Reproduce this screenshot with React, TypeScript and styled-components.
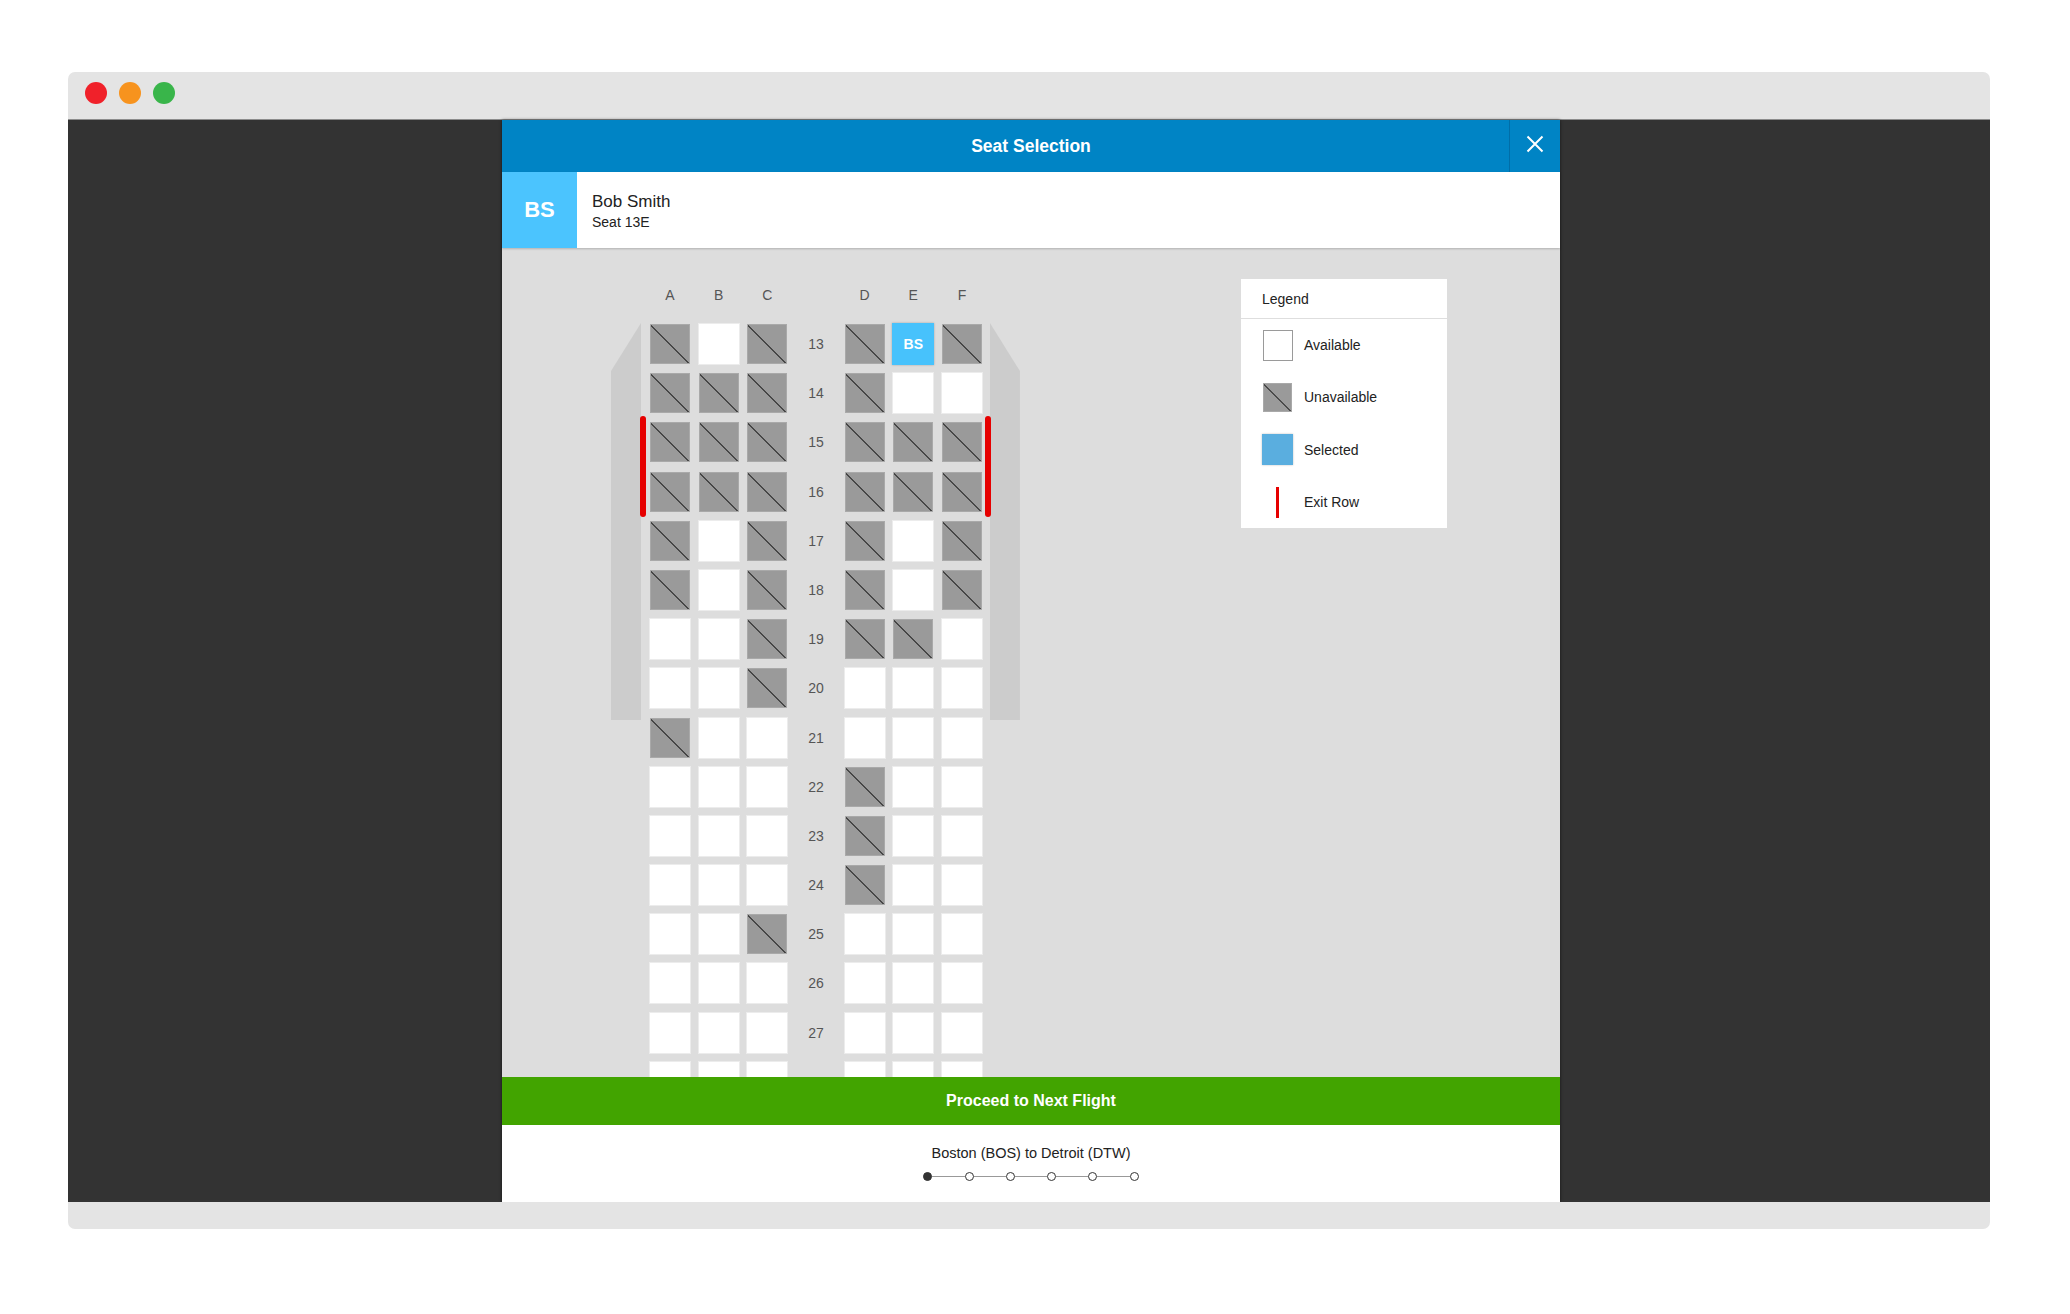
import React from 'react';
import styled, { createGlobalStyle } from 'styled-components';

const GlobalStyle = createGlobalStyle`
  html, body { margin: 0; padding: 0; background: #ffffff; }
  body { font-family: "Liberation Sans", Arial, Helvetica, sans-serif; color: #222; }
  * { box-sizing: border-box; }
`;

const Page = styled.div`
  width: 2070px;
  height: 1314px;
  padding: 72px 80px 0 68px;
`;

const Window = styled.div`
  width: 1922px;
  display: flex;
  flex-direction: column;
`;

const TitleBar = styled.div`
  height: 48px;
  background: #e4e4e4;
  border-radius: 7px 7px 0 0;
  border-bottom: 1px solid #8c8c8c;
  display: flex;
  align-items: flex-start;
  gap: 12px;
  padding: 10px 0 0 17px;
`;

const Light = styled.span<{ $color: string }>`
  width: 22px;
  height: 22px;
  border-radius: 50%;
  background: ${(p) => p.$color};
`;

const Content = styled.div`
  height: 1082px;
  background: #333333;
  display: flex;
  padding-left: 434px;
`;

const BottomBar = styled.div`
  height: 27px;
  background: #e4e4e4;
  border-radius: 0 0 7px 7px;
`;

const Modal = styled.div`
  width: 1058px;
  height: 100%;
  display: flex;
  flex-direction: column;
  box-shadow: 0 0 3px rgba(0, 0, 0, 0.6);
`;

const Header = styled.div`
  height: 52px;
  background: #0084c5;
  display: grid;
  grid-template-columns: 51px 1fr 51px;
  color: #fff;
`;

const Title = styled.div`
  grid-column: 2;
  display: flex;
  align-items: center;
  justify-content: center;
  font-size: 17.5px;
  font-weight: 700;
`;

const CloseButton = styled.div`
  border-left: 1px solid #006ea8;
  display: flex;
  align-items: center;
  justify-content: center;
  padding-bottom: 4px;
`;

const Passenger = styled.div`
  height: 76px;
  background: #fff;
  display: flex;
  position: relative;
  z-index: 1;
  box-shadow: 0 1px 2px rgba(0, 0, 0, 0.2);
`;

const Avatar = styled.div`
  width: 75px;
  background: #4bc4fe;
  color: #fff;
  font-size: 22px;
  font-weight: 700;
  display: flex;
  align-items: center;
  justify-content: center;
`;

const PassengerInfo = styled.div`
  display: flex;
  flex-direction: column;
  justify-content: center;
  padding: 2px 0 0 15px;
`;

const Name = styled.div`
  font-size: 17px;
  line-height: 20px;
  color: #222;
`;

const SeatLabel = styled.div`
  font-size: 14px;
  line-height: 17px;
  margin-top: 2px;
  color: #222;
`;

const Body = styled.div`
  flex: 1;
  min-height: 0;
  background: #dddddd;
  display: flex;
  overflow: hidden;
`;

const SeatMap = styled.div`
  margin-left: 109px;
  padding-top: 38.5px;
  display: flex;
  flex-direction: column;
`;

const ColumnHeader = styled.div`
  display: grid;
  grid-template-columns: repeat(7, 42px);
  column-gap: 6.67px;
  margin-left: 38px;
  height: 20px;
  align-items: center;
  text-align: center;
  font-size: 14px;
  color: #555;
`;

const Cabin = styled.div`
  position: relative;
  display: flex;
  margin-top: 20.5px;
`;

const Wall = styled.div<{ $side: 'left' | 'right' }>`
  width: 30px;
  height: 397px;
  margin-top: 0px;
  flex-shrink: 0;
  background: #cccccc;
  clip-path: ${(p) =>
    p.$side === 'left'
      ? 'polygon(0 48px, 100% 0, 100% 100%, 0 100%)'
      : 'polygon(0 0, 100% 48px, 100% 100%, 0 100%)'};
`;

const SeatGrid = styled.div`
  display: grid;
  grid-template-columns: repeat(7, 42px);
  grid-auto-rows: 42px;
  column-gap: 6.67px;
  row-gap: 7.2px;
  margin: 0 7px 0 8px;
`;

type Status = 'x' | 'o' | 's';

const Seat = styled.div<{ $status: Status }>`
  display: flex;
  align-items: center;
  justify-content: center;
  color: #fff;
  font-size: 14px;
  font-weight: 700;
  ${(p) =>
    p.$status === 'x'
      ? `
    margin: 1px;
    background-color: #9a9a9a;
    border: 1px solid #a9a9a9;
    background-image: linear-gradient(to top right, transparent calc(50% - 1px), #474747 calc(50% - 1px), #474747 calc(50% + 0.6px), transparent calc(50% + 0.6px));
  `
      : p.$status === 's'
      ? `
    background: #47c2fc;
    box-shadow: 0 0 2px rgba(0, 0, 0, 0.25);
  `
      : `
    background: #ffffff;
    border: 1px solid #ececec;
  `}
`;

const RowNumber = styled.div`
  display: flex;
  align-items: center;
  justify-content: center;
  font-size: 14px;
  color: #555;
`;

const ExitBar = styled.div<{ $side: 'left' | 'right' }>`
  position: absolute;
  top: 93px;
  ${(p) => (p.$side === 'left' ? 'left: 29px;' : 'right: 29px;')}
  width: 5.5px;
  height: 101px;
  border-radius: 3px;
  background: #e60000;
`;

const Legend = styled.div`
  margin: 31px 113px 0 auto;
  width: 206px;
  align-self: flex-start;
  background: #fff;
`;

const LegendHeader = styled.div`
  height: 40px;
  padding-left: 21px;
  border-bottom: 1px solid #dedede;
  display: flex;
  align-items: center;
  font-size: 14px;
  color: #222;
`;

const LegendItem = styled.div`
  height: 52.3px;
  display: flex;
  align-items: center;
  padding-left: 21px;
  gap: 11px;
  font-size: 14px;
  color: #222;
`;

const SwatchSlot = styled.div`
  width: 31px;
  height: 31px;
  display: flex;
  align-items: center;
  justify-content: center;
`;

const Swatch = styled.div<{ $kind: 'available' | 'unavailable' | 'selected' | 'exit' }>`
  ${(p) =>
    p.$kind === 'available'
      ? 'width: 30px; height: 31px; background: #fff; border: 1px solid #9a9a9a;'
      : p.$kind === 'unavailable'
      ? 'width: 29px; height: 29px; background-color: #9a9a9a; border: 1px solid #a9a9a9; background-image: linear-gradient(to top right, transparent calc(50% - 0.8px), #4a4a4a calc(50% - 0.8px), #4a4a4a calc(50% + 0.5px), transparent calc(50% + 0.5px));'
      : p.$kind === 'selected'
      ? 'width: 31px; height: 31px; background: #5aaedf; box-shadow: 0 0 2px rgba(0,0,0,0.25);'
      : 'width: 3px; height: 31px; background: #e60000;'}
`;

const ProceedButton = styled.div`
  height: 48px;
  background: #42a400;
  color: #fff;
  font-size: 16px;
  font-weight: 700;
  display: flex;
  align-items: center;
  justify-content: center;
`;

const Footer = styled.div`
  height: 77px;
  background: #fff;
  display: flex;
  flex-direction: column;
  align-items: center;
  padding-top: 20px;
`;

const Route = styled.div`
  font-size: 14.5px;
  line-height: 17px;
  color: #222;
`;

const Steps = styled.div`
  display: flex;
  align-items: center;
  margin-top: 10px;
`;

const Dot = styled.span<{ $active: boolean }>`
  width: 9px;
  height: 9px;
  border-radius: 50%;
  border: 1.5px solid #333;
  background: ${(p) => (p.$active ? '#333' : '#fff')};
`;

const Connector = styled.span`
  width: 32.3px;
  height: 1px;
  background: #999;
`;

const rows: [number, string][] = [
  [13, 'xoxxsx'],
  [14, 'xxxxoo'],
  [15, 'xxxxxx'],
  [16, 'xxxxxx'],
  [17, 'xoxxox'],
  [18, 'xoxxox'],
  [19, 'ooxxxo'],
  [20, 'ooxooo'],
  [21, 'xooooo'],
  [22, 'oooxoo'],
  [23, 'oooxoo'],
  [24, 'oooxoo'],
  [25, 'ooxooo'],
  [26, 'oooooo'],
  [27, 'oooooo'],
  [28, 'oooooo'],
];

const letters = ['A', 'B', 'C', '', 'D', 'E', 'F'];

const CloseIcon = () => (
  <svg width="18" height="18" viewBox="0 0 18 18" fill="none">
    <path d="M1.5 1.5 L16.5 16.5 M16.5 1.5 L1.5 16.5" stroke="#fff" strokeWidth="2" />
  </svg>
);

export default function App() {
  return (
    <>
      <GlobalStyle />
      <Page>
        <Window>
          <TitleBar>
            <Light $color="#f0212a" />
            <Light $color="#f7931e" />
            <Light $color="#39b54a" />
          </TitleBar>
          <Content>
            <Modal>
              <Header>
                <Title>Seat Selection</Title>
                <CloseButton>
                  <CloseIcon />
                </CloseButton>
              </Header>
              <Passenger>
                <Avatar>BS</Avatar>
                <PassengerInfo>
                  <Name>Bob Smith</Name>
                  <SeatLabel>Seat 13E</SeatLabel>
                </PassengerInfo>
              </Passenger>
              <Body>
                <SeatMap>
                  <ColumnHeader>
                    {letters.map((l, i) => (
                      <span key={i}>{l}</span>
                    ))}
                  </ColumnHeader>
                  <Cabin>
                    <Wall $side="left" />
                    <SeatGrid>
                      {rows.map(([num, seats]) => {
                        const cells = seats.split('') as Status[];
                        return (
                          <React.Fragment key={num}>
                            {cells.slice(0, 3).map((s, i) => (
                              <Seat key={`l${i}`} $status={s}>
                                {s === 's' ? 'BS' : null}
                              </Seat>
                            ))}
                            <RowNumber>{num}</RowNumber>
                            {cells.slice(3).map((s, i) => (
                              <Seat key={`r${i}`} $status={s}>
                                {s === 's' ? 'BS' : null}
                              </Seat>
                            ))}
                          </React.Fragment>
                        );
                      })}
                    </SeatGrid>
                    <Wall $side="right" />
                    <ExitBar $side="left" />
                    <ExitBar $side="right" />
                  </Cabin>
                </SeatMap>
                <Legend>
                  <LegendHeader>Legend</LegendHeader>
                  <LegendItem>
                    <SwatchSlot>
                      <Swatch $kind="available" />
                    </SwatchSlot>
                    Available
                  </LegendItem>
                  <LegendItem>
                    <SwatchSlot>
                      <Swatch $kind="unavailable" />
                    </SwatchSlot>
                    Unavailable
                  </LegendItem>
                  <LegendItem>
                    <SwatchSlot>
                      <Swatch $kind="selected" />
                    </SwatchSlot>
                    Selected
                  </LegendItem>
                  <LegendItem>
                    <SwatchSlot>
                      <Swatch $kind="exit" />
                    </SwatchSlot>
                    Exit Row
                  </LegendItem>
                </Legend>
              </Body>
              <ProceedButton>Proceed to Next Flight</ProceedButton>
              <Footer>
                <Route>Boston (BOS) to Detroit (DTW)</Route>
                <Steps>
                  {[0, 1, 2, 3, 4, 5].map((i) => (
                    <React.Fragment key={i}>
                      {i > 0 && <Connector />}
                      <Dot $active={i === 0} />
                    </React.Fragment>
                  ))}
                </Steps>
              </Footer>
            </Modal>
          </Content>
          <BottomBar />
        </Window>
      </Page>
    </>
  );
}
